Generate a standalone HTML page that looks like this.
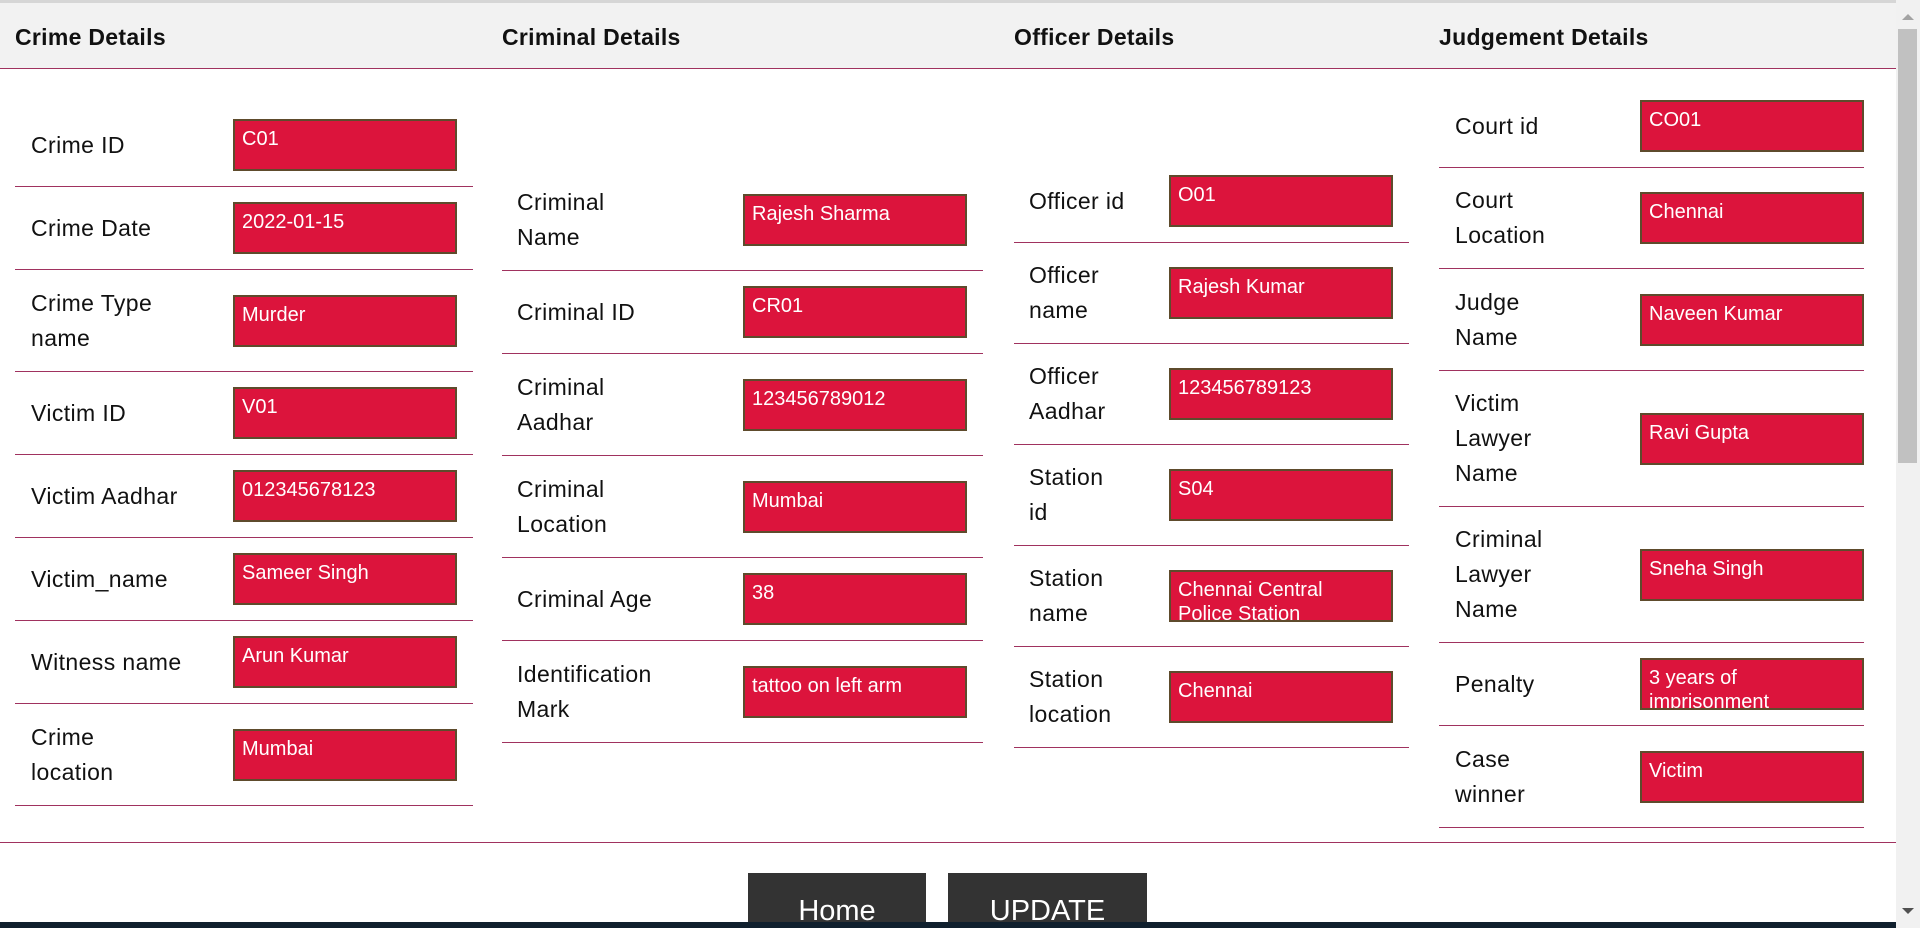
<!DOCTYPE html>
<html><head><meta charset="utf-8"><style>
*{box-sizing:border-box;margin:0;padding:0}
body{width:1920px;height:928px;overflow:hidden;background:#fff;font-family:"Liberation Sans",sans-serif;position:relative}
.top{position:absolute;left:0;top:0;width:1896px;height:3px;background:#d6d6d6}
.head{position:absolute;left:0;top:3px;width:1896px;height:66px;background:#f2f2f2;border-bottom:1px solid #a0325f}
.h{position:absolute;top:21px;font-size:23px;font-weight:bold;color:#111;letter-spacing:0.3px}
.col{position:absolute}
.row{display:flex;align-items:center;border-bottom:1px solid #a0325f;position:relative}
.lab{position:absolute;font-size:23px;line-height:35px;color:#111;letter-spacing:0.4px}
.inp{position:absolute;width:224px;height:52px;background:#dc143c;border:2px solid #5e4b2c;color:#fff;font-size:20px;line-height:24px;padding:6px 30px 0 7px;overflow:hidden}
.bl{position:absolute;left:0;top:842px;width:1896px;height:1px;background:#a0325f}
.btn{position:absolute;top:873px;height:55px;background:#333;color:#fff;font-size:29px;text-align:center;padding-top:22px}
.sb{position:absolute;left:1896px;top:0;width:24px;height:928px;background:#f1f1f1}
.th{position:absolute;left:1898px;top:29px;width:19px;height:434px;background:#c1c1c1}
.task{position:absolute;left:0;top:922px;width:1896px;height:6px;background:#10202e}
</style></head><body>
<div class="top"></div>
<div class="head">
<div class="h" style="left:15px">Crime Details</div>
<div class="h" style="left:502px">Criminal Details</div>
<div class="h" style="left:1014px">Officer Details</div>
<div class="h" style="left:1439px">Judgement Details</div>
</div>

<div class="col" style="left:15px;top:104px;width:458px">
<div class="row" style="height:83px"><div class="lab" style="left:16px">Crime ID</div><div class="inp" style="left:218px">C01</div></div>
<div class="row" style="height:83px"><div class="lab" style="left:16px">Crime Date</div><div class="inp" style="left:218px">2022-01-15</div></div>
<div class="row" style="height:102px"><div class="lab" style="left:16px">Crime Type<br>name</div><div class="inp" style="left:218px">Murder</div></div>
<div class="row" style="height:83px"><div class="lab" style="left:16px">Victim ID</div><div class="inp" style="left:218px">V01</div></div>
<div class="row" style="height:83px"><div class="lab" style="left:16px">Victim Aadhar</div><div class="inp" style="left:218px">012345678123</div></div>
<div class="row" style="height:83px"><div class="lab" style="left:16px">Victim_name</div><div class="inp" style="left:218px">Sameer Singh</div></div>
<div class="row" style="height:83px"><div class="lab" style="left:16px">Witness name</div><div class="inp" style="left:218px">Arun Kumar</div></div>
<div class="row" style="height:102px"><div class="lab" style="left:16px">Crime<br>location</div><div class="inp" style="left:218px">Mumbai</div></div>
</div>

<div class="col" style="left:502px;top:169px;width:481px">
<div class="row" style="height:102px"><div class="lab" style="left:15px">Criminal<br>Name</div><div class="inp" style="left:241px">Rajesh Sharma</div></div>
<div class="row" style="height:83px"><div class="lab" style="left:15px">Criminal ID</div><div class="inp" style="left:241px">CR01</div></div>
<div class="row" style="height:102px"><div class="lab" style="left:15px">Criminal<br>Aadhar</div><div class="inp" style="left:241px">123456789012</div></div>
<div class="row" style="height:102px"><div class="lab" style="left:15px">Criminal<br>Location</div><div class="inp" style="left:241px">Mumbai</div></div>
<div class="row" style="height:83px"><div class="lab" style="left:15px">Criminal Age</div><div class="inp" style="left:241px">38</div></div>
<div class="row" style="height:102px"><div class="lab" style="left:15px">Identification<br>Mark</div><div class="inp" style="left:241px">tattoo on left arm</div></div>
</div>

<div class="col" style="left:1014px;top:160px;width:395px">
<div class="row" style="height:83px"><div class="lab" style="left:15px">Officer id</div><div class="inp" style="left:155px">O01</div></div>
<div class="row" style="height:101px"><div class="lab" style="left:15px">Officer<br>name</div><div class="inp" style="left:155px">Rajesh Kumar</div></div>
<div class="row" style="height:101px"><div class="lab" style="left:15px">Officer<br>Aadhar</div><div class="inp" style="left:155px">123456789123</div></div>
<div class="row" style="height:101px"><div class="lab" style="left:15px">Station<br>id</div><div class="inp" style="left:155px">S04</div></div>
<div class="row" style="height:101px"><div class="lab" style="left:15px">Station<br>name</div><div class="inp" style="left:155px">Chennai Central<br>Police Station</div></div>
<div class="row" style="height:101px"><div class="lab" style="left:15px">Station<br>location</div><div class="inp" style="left:155px">Chennai</div></div>
</div>

<div class="col" style="left:1439px;top:85px;width:425px">
<div class="row" style="height:83px"><div class="lab" style="left:16px">Court id</div><div class="inp" style="left:201px">CO01</div></div>
<div class="row" style="height:101px"><div class="lab" style="left:16px">Court<br>Location</div><div class="inp" style="left:201px">Chennai</div></div>
<div class="row" style="height:102px"><div class="lab" style="left:16px">Judge<br>Name</div><div class="inp" style="left:201px">Naveen Kumar</div></div>
<div class="row" style="height:136px"><div class="lab" style="left:16px">Victim<br>Lawyer<br>Name</div><div class="inp" style="left:201px">Ravi Gupta</div></div>
<div class="row" style="height:136px"><div class="lab" style="left:16px">Criminal<br>Lawyer<br>Name</div><div class="inp" style="left:201px">Sneha Singh</div></div>
<div class="row" style="height:83px"><div class="lab" style="left:16px">Penalty</div><div class="inp" style="left:201px">3 years of<br>imprisonment</div></div>
<div class="row" style="height:102px"><div class="lab" style="left:16px">Case<br>winner</div><div class="inp" style="left:201px">Victim</div></div>
</div>

<div class="bl"></div>
<div class="btn" style="left:748px;width:178px">Home</div>
<div class="btn" style="left:948px;width:199px">UPDATE</div>
<div class="task"></div>
<div class="sb"></div>
<div class="th"></div>
<div style="position:absolute;left:1902px;top:14px;width:0;height:0;border-left:6px solid transparent;border-right:6px solid transparent;border-bottom:6px solid #a3a3a3"></div>
<div style="position:absolute;left:1902px;top:908px;width:0;height:0;border-left:6px solid transparent;border-right:6px solid transparent;border-top:6px solid #505050"></div>
</body></html>
